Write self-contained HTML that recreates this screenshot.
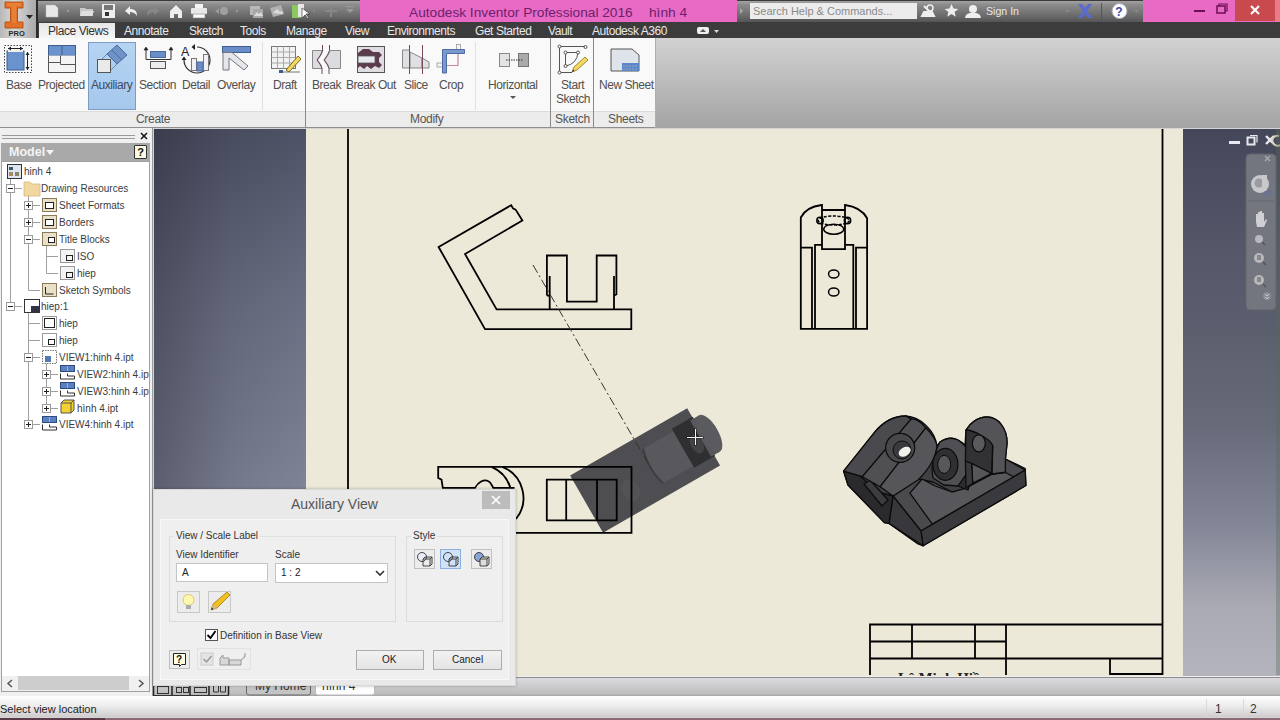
<!DOCTYPE html>
<html><head><meta charset="utf-8">
<style>
*{margin:0;padding:0;box-sizing:border-box}
html,body{width:1280px;height:720px;overflow:hidden;background:#d4d4d4;font-family:"Liberation Sans",sans-serif;position:relative}
.a{position:absolute}
.t{position:absolute;white-space:nowrap}
/* title bar */
#qat{left:0;top:0;width:1280px;height:22px;background:linear-gradient(#3a3a3a 0,#3a3a3a 1px,#a2a2a2 1px,#8a8a8a 5px,#6a6a6a 16px,#545456 22px)}
#appbtn{left:0;top:0;width:38px;height:39px;background:linear-gradient(90deg,#b8b8b8,#d8d8d8 40%,#a8a8a8);border-right:2px solid #2a2a2a;border-bottom:1px solid #2a2a2a}
#pinkL{left:360px;top:0;width:377px;height:22px;background:#e96ac4}
#pinkR{left:1143px;top:0;width:137px;height:22px;background:#e96ac4}
#closeb{left:1235px;top:0;width:40px;height:21px;background:#c94a4e}
#tabs{left:37px;top:22px;width:1243px;height:17px;background:#3c3c3c}
.tab{position:absolute;top:23px;height:17px;font-size:12px;line-height:17px;color:#e8e8e8;letter-spacing:-0.45px}
#ribbon{left:0;top:38px;width:656px;height:90px;background:#f9f9f9}
#ribR{left:656px;top:38px;width:624px;height:90px;background:linear-gradient(#d2d2d2,#a4a4a4)}
#pbar{left:0;top:111px;width:656px;height:17px;background:#ececec;border-top:1px solid #dcdcdc}
.lbl{position:absolute;font-size:12px;color:#505050;white-space:nowrap;line-height:14px;letter-spacing:-0.45px}
.plbl{position:absolute;top:111px;height:16px;font-size:12px;line-height:16px;color:#555;white-space:nowrap;letter-spacing:-0.3px}
.sep{position:absolute;top:38px;width:1px;height:90px;background:#8a8a8a}
.isep{position:absolute;top:42px;width:1px;height:68px;background:#e0e0e0}
/* browser */
#browser{left:0;top:128px;width:153px;height:569px;background:#f0f0f0;border-right:1px solid #9a9a9a}
#tree{left:1px;top:161px;width:149px;height:531px;background:#fff;border:1px solid #a0a0a0}
.row{position:absolute;height:17px;font-size:10px;line-height:17px;color:#3c3c3c;white-space:nowrap}
/* viewport */
#vp{left:154px;top:129px;width:1126px;height:546px;background:linear-gradient(100deg,#3f4354 0%,#4c5062 40%,#6a6d7f 70%,#8a8c9c 100%)}
#status{left:0;top:697px;width:1280px;height:20px;background:linear-gradient(#fafafa,#e4e4e4);}
#dock{left:153px;top:675px;width:1127px;height:22px;background:linear-gradient(#dedede,#c8c8c8)}
</style></head><body>

<div class="a" id="qat"></div>
<div class="a" id="pinkL"></div>
<div class="a" id="pinkR"></div>
<div class="a" id="closeb"></div>
<div class="t" style="left:409px;top:4px;font-size:13.7px;color:#6c1f6c;line-height:17px">Autodesk Inventor Professional 2016</div>
<div class="t" style="left:649px;top:4px;font-size:13.7px;color:#6c1f6c;line-height:17px">hình 4</div>
<div class="a" style="left:750px;top:3px;width:167px;height:16px;background:#ececec"></div>
<div class="t" style="left:753px;top:4px;font-size:11px;color:#8a8a8a;line-height:14px">Search Help &amp; Commands...</div>
<div class="a" style="left:740px;top:8px;width:0;height:0;border-left:3px solid #aaa;border-top:3px solid transparent;border-bottom:3px solid transparent"></div>
<div class="t" style="left:986px;top:4px;font-size:10.6px;color:#e8e8e8;line-height:14px">Sign In</div>
<svg class="a" style="left:0;top:0" width="1280" height="40">
<!-- QAT icons -->
<path d="M46 5h9l3 3v9H46z" fill="#e8e8e8" stroke="#bbb" stroke-width=".5"/>
<circle cx="68" cy="11" r="1.3" fill="#999"/>
<path d="M80 8h5l1 1h7v7H80z" fill="#c8c8c8"/><path d="M82 11h12l-2 5H80z" fill="#e0e0e0"/>
<rect x="102" y="4" width="13" height="14" fill="#eee"/><rect x="104" y="5" width="9" height="5" fill="#777"/><rect x="105" y="12" width="4" height="4" fill="#333"/>
<path d="M125 11l5-5v3c5 0 7 2 7 7-2-3-4-4-7-4v3z" fill="#eee"/>
<path d="M159 11l-5-5v3c-5 0-7 2-7 7 2-3 4-4 7-4v3z" fill="#888"/>
<path d="M170 11l6-6 6 6v7h-4v-4h-4v4h-4z" fill="#eee"/>
<rect x="195" y="4" width="8" height="4" fill="#f4f4f4"/><rect x="191" y="8" width="16" height="6" rx="1" fill="#e8e8e8"/><rect x="193" y="14" width="12" height="4" fill="#fafafa" stroke="#888" stroke-width=".6"/>
<path d="M215 11l4-3v6z" fill="#9a9a9a"/><circle cx="224" cy="11" r="4" fill="#a0a0a0"/><circle cx="237" cy="11" r="1.2" fill="#999"/>
<rect x="250" y="6" width="10" height="9" fill="#b8b8b8"/><rect x="253" y="9" width="10" height="9" fill="#a8a8a8"/><path d="M254 16l3-4 2 2 2-2 2 4z" fill="#ddd"/>
<path d="M270 8l11-3 3 9-11 3z" fill="#b0b0b0"/><path d="M273 13l4-4 3 3 2-1 1 3z" fill="#ddd"/>
<rect x="293" y="6" width="10" height="12" fill="#78b850"/><path d="M298 4h6v13h-6z" fill="#e8e8e8"/><rect x="292" y="5" width="6" height="13" fill="#8cc860"/>
<path d="M302 8l0 10 3-3 3 4 1-1-3-4h4z" fill="#fff" stroke="#222" stroke-width=".6"/>
<circle cx="314" cy="11" r="1.2" fill="#888"/>
<path d="M331 5v12M325 11h12" stroke="#888" stroke-width="2"/>
<path d="M346 9h8l-4 4z" fill="#999"/><rect x="346" y="6" width="8" height="1.3" fill="#999"/>
<!-- search icons -->
<path d="M924 6l9 9M922 16h12l-2-4h-8z" stroke="#eee" stroke-width="2" fill="#eee"/><circle cx="930" cy="8" r="3" fill="none" stroke="#eee" stroke-width="1.5"/>
<path d="M951.5 4l2 4.5 4.8.4-3.7 3.1 1.2 4.7-4.3-2.6-4.3 2.6 1.2-4.7-3.7-3.1 4.8-.4z" fill="#eee"/>
<circle cx="973" cy="9" r="4" fill="#eee"/><path d="M965 18c1-5 4-5 8-5s7 0 8 5z" fill="#eee"/>
<path d="M1065 10h5l-2.5 3z" fill="#888"/>
<path d="M1078 4l5 7-5 7h4l3-4 3 4h4l-5-7 5-7h-4l-3 4-3-4z" fill="#5a6ad0"/>
<rect x="1101" y="3" width="1" height="17" fill="#555"/>
<circle cx="1119.5" cy="11" r="7.5" fill="#fff" stroke="#aab" stroke-width="1"/>
<text x="1115.3" y="16" font-family="Liberation Sans" font-weight="bold" font-size="12" fill="#3548a8">?</text>
<path d="M1134 10h5l-2.5 3z" fill="#888"/>
<!-- window buttons -->
<rect x="1194" y="10" width="11" height="2" fill="#6a1050"/>
<rect x="1217" y="6" width="8" height="7" fill="none" stroke="#6a1050" stroke-width="1.5"/><path d="M1219 6V4h8v7h-2" fill="none" stroke="#6a1050" stroke-width="1.2"/>
<path d="M1251 6l8 8M1259 6l-8 8" stroke="#fff" stroke-width="2"/>
<rect x="1275" y="0" width="5" height="22" fill="#e87a8a"/>
</svg>
<div class="a" id="tabs"></div>
<div class="a" style="left:39px;top:23px;width:76px;height:16px;background:linear-gradient(#e6e6e6,#f6f6f6)"></div>
<div class="tab" style="left:48px;color:#333">Place Views</div>
<div class="tab" style="left:124px">Annotate</div>
<div class="tab" style="left:189px">Sketch</div>
<div class="tab" style="left:240px">Tools</div>
<div class="tab" style="left:286px">Manage</div>
<div class="tab" style="left:345px">View</div>
<div class="tab" style="left:387px">Environments</div>
<div class="tab" style="left:475px">Get Started</div>
<div class="tab" style="left:548px">Vault</div>
<div class="tab" style="left:592px">Autodesk A360</div>
<svg class="a" style="left:695px;top:25px" width="30" height="12"><rect x="2" y="2" width="12" height="7" rx="2" fill="#eee"/><path d="M5 7l3-3 3 3z" fill="#555"/><path d="M19 5h5l-2.5 3z" fill="#ddd"/></svg>
<div class="a" id="appbtn"></div>
<svg class="a" style="left:0;top:0" width="38" height="39">
<path d="M5 2h18v6h-5.5v14h5.5v6H5v-6h5.5V8H5z" fill="#e0702a" stroke="#b85418" stroke-width="1"/>
<path d="M7 3h14v3h-5v17h-4V6H7z" fill="#f08a40" opacity=".6"/>
<path d="M26 15h7l-3.5 4z" fill="#222"/>
<text x="8.5" y="35.5" font-family="Liberation Sans" font-weight="bold" font-size="7.5" fill="#2a2a2a">PRO</text>
</svg>

<div class="a" id="ribbon"></div>
<div class="a" id="ribR"></div>
<div class="a" id="pbar"></div>
<div class="a" style="left:0;top:127px;width:656px;height:1px;background:#8e8e8e"></div>
<div class="a" style="left:88px;top:42px;width:48px;height:68px;background:linear-gradient(#b6d4f2,#a6c8ec);border:1px solid #7c9cc4"></div>
<div class="sep" style="left:305px"></div>
<div class="sep" style="left:550px"></div>
<div class="sep" style="left:593px"></div>
<div class="sep" style="left:655px;background:#b0b0b0"></div>
<div class="isep" style="left:262px"></div>
<div class="isep" style="left:475px"></div>
<div class="lbl" style="left:6px;top:78px">Base</div>
<div class="lbl" style="left:38px;top:78px">Projected</div>
<div class="lbl" style="left:91px;top:78px;color:#3c4a5c">Auxiliary</div>
<div class="lbl" style="left:139px;top:78px">Section</div>
<div class="lbl" style="left:182px;top:78px">Detail</div>
<div class="lbl" style="left:217px;top:78px">Overlay</div>
<div class="lbl" style="left:273px;top:78px">Draft</div>
<div class="lbl" style="left:312px;top:78px">Break</div>
<div class="lbl" style="left:346px;top:78px">Break Out</div>
<div class="lbl" style="left:404px;top:78px">Slice</div>
<div class="lbl" style="left:439px;top:78px">Crop</div>
<div class="lbl" style="left:488px;top:78px">Horizontal</div>
<div class="lbl" style="left:561px;top:78px">Start</div>
<div class="lbl" style="left:556px;top:92px">Sketch</div>
<div class="lbl" style="left:599px;top:78px">New Sheet</div>
<div class="plbl" style="left:136px">Create</div>
<div class="plbl" style="left:410px">Modify</div>
<div class="plbl" style="left:555px">Sketch</div>
<div class="plbl" style="left:608px">Sheets</div>
<svg class="a" style="left:0;top:38px" width="660" height="74">
<g stroke-width="1">
<!-- Base -->
<rect x="4.5" y="7.5" width="27" height="27" fill="none" stroke="#444" stroke-dasharray="1.5 1.5"/>
<rect x="7" y="13" width="17" height="19" fill="#6a92cc" stroke="#3e5e90"/>
<rect x="8" y="12" width="15" height="2" fill="#f0f0f0"/>
<path d="M8 10.5h15M27.5 14v18" stroke="#222"/>
<path d="M8 10.5l3-2v4zM23 10.5l-3-2v4zM27.5 14l-2 3h4zM27.5 32l-2-3h4z" fill="#222" stroke="none"/>
<!-- Projected -->
<rect x="48.5" y="7.5" width="27" height="10" fill="#6a92cc" stroke="#3e5e90"/>
<path d="M62 7.5v10" stroke="#3e5e90"/>
<path d="M48.5 17.5v17h27v-17M48.5 24.5h12v-7M60.5 24.5v2h15" fill="#f4f4f4" stroke="#555"/>
<!-- Auxiliary -->
<path d="M107 16l10-9 10 10-10 9z" fill="#6f93c9" stroke="#4a6a9a"/>
<path d="M112 12l10 10" stroke="#4a6a9a"/>
<path d="M107 16l-7 7M117 26l-8 8" stroke="#6a88b0"/>
<rect x="97.5" y="21.5" width="13" height="13" fill="#eaeaea" stroke="#555"/>
<!-- Section -->
<path d="M146 10v11.5h25V10" fill="none" stroke="#333"/>
<path d="M144 12l2-3 2 3zM169 12l2-3 2 3z" fill="#222" stroke="#222" stroke-width=".6"/>
<rect x="150.5" y="13.5" width="15" height="6" fill="#6a8cc8" stroke="#4a6aa0"/>
<rect x="150.5" y="23.5" width="15" height="7" fill="#ececf0" stroke="#555"/>
<!-- Detail -->
<text x="181" y="17.5" font-family="Liberation Sans" font-size="12.5" fill="#222">A</text>
<path d="M197 9a13 13 0 1 1 -13 13" fill="none" stroke="#333" stroke-width="1.2"/>
<path d="M195 6l-3.5 3 3.5 3zM181.5 22l2.5-3.5 2.5 3.5z" fill="#222"/>
<rect x="191.5" y="20.5" width="5" height="12" fill="#f0f0f4" stroke="#777"/>
<rect x="197" y="24" width="6" height="9" fill="#6a8cc8" stroke="#4a6aa0"/>
<rect x="203.5" y="16.5" width="5" height="16" fill="#f0f0f4" stroke="#777"/>
<!-- Overlay -->
<rect x="222.5" y="8.5" width="28" height="6" fill="#6a8cc8" stroke="#3e5e90"/>
<path d="M223 14.5v17.5h6V20l15 12 4-4-16-13.5z" fill="#e4e6ec" stroke="#777"/>
<!-- Draft -->
<rect x="271.5" y="8.5" width="24" height="22" fill="#f2f2f2" stroke="#777"/>
<path d="M271.5 14h24M271.5 19.5h24M271.5 25h24M277.5 8.5v22M283.5 8.5v22M289.5 8.5v22" stroke="#aaa"/>
<path d="M286 32l12-14 3 3-12 13z" fill="#f2d860" stroke="#7a6a20"/>
<rect x="279" y="32" width="4" height="3" fill="#3e5e90"/><path d="M283 34h17" stroke="#777"/>
<!-- Break -->
<path d="M312.5 12.5H323L321 17L317.5 22L321 27L322 30.5H312.5Z" fill="#dcdce0" stroke="#888"/>
<path d="M340.5 12.5H330L328 17L324.5 22L328 27L329 30.5H340.5Z" fill="#dcdce0" stroke="#888"/>
<path d="M322.5 7V12.5L320.5 17L317 22L320.5 27L322 30.5V36M329.5 7V12.5L327.5 17L324 22L327.5 27L329 30.5V36" fill="none" stroke="#6a4a58" stroke-width="1"/>
<!-- Break Out -->
<rect x="357.5" y="8.5" width="27" height="26" fill="#e0dde0" stroke="#555"/>
<path d="M358 15l5-4h6l4 3h6l3 3-3 3v4l3 3-3 3-4-2-4 3-4-3-3 3-4-3-2 2z" fill="#5c3c4c"/>
<rect x="358" y="18" width="17" height="7" fill="#e8e8f0" stroke="#555" stroke-width=".8"/>
<!-- Slice -->
<path d="M402.5 12v18h7V12z" fill="#e0e0e4" stroke="#888"/>
<path d="M410 14l12 6v10h-12zM422 20l7 4v6h-7z" fill="#e0e0e4" stroke="#888"/>
<path d="M409.5 7v29M422.5 7v29" stroke="#7a4a5a" stroke-width="1"/>
<!-- Crop -->
<path d="M438 27.5h20v-13" fill="none" stroke="#c48a98" stroke-width="1.2"/>
<rect x="437" y="25" width="6" height="4" fill="#f4f4f4" stroke="#999" stroke-width=".8"/>
<rect x="456.5" y="6.5" width="4" height="5" fill="#f4f4f4" stroke="#999" stroke-width=".8"/>
<path d="M442.5 11.5h22v4h-18v19.5h-4z" fill="#7a98d0" stroke="#4e6aa0"/>
<!-- Horizontal -->
<rect x="499.5" y="15.5" width="10" height="13" fill="#e4e4e4" stroke="#888"/>
<rect x="518.5" y="15.5" width="10" height="13" fill="#aaa" stroke="#777"/>
<path d="M506 22h17" stroke="#333" stroke-dasharray="1.5 1"/>
<path d="M510 58h6l-3 3z" fill="#555"/>
<!-- Start Sketch -->
<path d="M559.5 8.5H585M559.5 8.5V34M559.5 34.5H572" fill="none" stroke="#555" stroke-width="1"/>
<path d="M565.5 14.5H578M565.5 14.5V28M578 14.5Q577 26 565.5 28" fill="none" stroke="#555" stroke-width="1"/>
<g fill="#fff" stroke="#444" stroke-width=".9"><circle cx="559.5" cy="8.5" r="1.5"/><circle cx="585.5" cy="9" r="1.5"/><circle cx="559.5" cy="34.5" r="1.5"/><circle cx="565.5" cy="14.5" r="1.5"/><circle cx="578" cy="14.5" r="1.5"/><circle cx="565.5" cy="28" r="1.5"/></g>
<path d="M572 34l2-5 11-10 3 3-11 10z" fill="#f2d860" stroke="#8a7420" stroke-width=".8"/><path d="M572 34l1-2.5 1.5 1.5z" fill="#333"/>
<!-- New Sheet -->
<path d="M611 11h21l7 6v16h-28z" fill="#dfe3ea" stroke="#555"/>
<rect x="622" y="25" width="17" height="8" fill="#5b86c8"/>
<path d="M623 28h15M623 31h15" stroke="#9ab" stroke-dasharray="2 1"/>
</g>
</svg>

<div class="a" id="browser"></div>
<svg class="a" style="left:0;top:128px" width="153" height="34">
<path d="M2 7.5h133M2 10.5h133" stroke="#9a9a9a" stroke-width="1"/>
<path d="M141 5l6 6M147 5l-6 6" stroke="#111" stroke-width="1.5"/>
</svg>
<div class="a" style="left:1px;top:143px;width:149px;height:18px;background:#a9a9a9"></div>
<div class="t" style="left:9px;top:145px;font-size:12.5px;font-weight:bold;color:#f4f4f4;line-height:14px">Model</div>
<svg class="a" style="left:46px;top:150px" width="10" height="6"><path d="M0 0h8l-4 5z" fill="#f4f4f4"/></svg>
<div class="a" style="left:134px;top:145px;width:13px;height:14px;background:#fffbe0;border:1px solid #333;border-radius:1px;font-size:11px;font-weight:bold;line-height:12px;text-align:center;color:#111">?</div>
<div class="a" id="tree"></div>
<svg class="a" style="left:0;top:160px" width="152" height="280">
<path d="M10.5 19V146 M28.5 36V130.5 M46.5 83V113.5 M28.5 150V264 M46.5 201V248 M14 28.5H22 M32 45.5H40 M32 62.5H40 M32 79.5H40 M28.5 130.5H40 M46.5 96.5H58 M46.5 113.5H58 M14 146.5H22 M28.5 163.5H40 M28.5 180.5H40 M32 197.5H40 M50 214.5H58 M50 231.5H58 M50 248.5H58 M32 264.5H40" stroke="#a0a0a0" stroke-width="1" fill="none"/>
<rect x="6.5" y="24.5" width="8" height="8" fill="#fff" stroke="#9a9a9a"/>
<path d="M8 28.5H13" stroke="#222" stroke-width="1"/>
<rect x="24.5" y="41.5" width="8" height="8" fill="#fff" stroke="#9a9a9a"/>
<path d="M26 45.5H31M28.5 43V48" stroke="#222" stroke-width="1"/>
<rect x="24.5" y="58.5" width="8" height="8" fill="#fff" stroke="#9a9a9a"/>
<path d="M26 62.5H31M28.5 60V65" stroke="#222" stroke-width="1"/>
<rect x="24.5" y="75.5" width="8" height="8" fill="#fff" stroke="#9a9a9a"/>
<path d="M26 79.5H31" stroke="#222" stroke-width="1"/>
<rect x="6.5" y="142.5" width="8" height="8" fill="#fff" stroke="#9a9a9a"/>
<path d="M8 146.5H13" stroke="#222" stroke-width="1"/>
<rect x="24.5" y="193.5" width="8" height="8" fill="#fff" stroke="#9a9a9a"/>
<path d="M26 197.5H31" stroke="#222" stroke-width="1"/>
<rect x="42.5" y="210.5" width="8" height="8" fill="#fff" stroke="#9a9a9a"/>
<path d="M44 214.5H49M46.5 212V217" stroke="#222" stroke-width="1"/>
<rect x="42.5" y="227.5" width="8" height="8" fill="#fff" stroke="#9a9a9a"/>
<path d="M44 231.5H49M46.5 229V234" stroke="#222" stroke-width="1"/>
<rect x="42.5" y="244.5" width="8" height="8" fill="#fff" stroke="#9a9a9a"/>
<path d="M44 248.5H49M46.5 246V251" stroke="#222" stroke-width="1"/>
<rect x="24.5" y="260.5" width="8" height="8" fill="#fff" stroke="#9a9a9a"/>
<path d="M26 264.5H31M28.5 262V267" stroke="#222" stroke-width="1"/>

<!-- icons -->
<rect x="7.5" y="4.5" width="14" height="14" fill="#dde6f0" stroke="#333"/><rect x="9" y="7" width="4" height="3" fill="#456"/><rect x="9" y="12" width="4" height="4" fill="#a86"/><rect x="15" y="12" width="4" height="4" fill="#886"/>
<path d="M24 22h6l2 2h8v12H24z" fill="#f0d8a0" stroke="#d8b878" stroke-width=".8"/>
<g fill="#e8e0c8" stroke="#8a7a5a"><rect x="42.5" y="38.5" width="14" height="13"/><rect x="42.5" y="55.5" width="14" height="13"/><rect x="42.5" y="72.5" width="14" height="13"/><rect x="42.5" y="123.5" width="14" height="13"/></g>
<g fill="#fff" stroke="#222"><rect x="45.5" y="42.5" width="8" height="6"/><rect x="45.5" y="59.5" width="8" height="6"/><rect x="48.5" y="77.5" width="6" height="5"/><path d="M45.5 127v7h8" fill="none"/></g>
<g fill="#f4f4f4" stroke="#999"><rect x="60.5" y="89.5" width="14" height="13"/><rect x="60.5" y="106.5" width="14" height="13"/></g>
<g fill="none" stroke="#222"><rect x="66.5" y="95.5" width="6" height="5"/><rect x="66.5" y="112.5" width="6" height="5"/></g>
<rect x="24.5" y="139.5" width="15" height="13" fill="#fff" stroke="#333"/><rect x="31" y="146" width="8" height="6" fill="#334"/>
<rect x="42.5" y="156.5" width="14" height="13" fill="#fff" stroke="#999"/><rect x="44.5" y="158.5" width="10" height="9" fill="none" stroke="#222"/>
<rect x="42.5" y="173.5" width="14" height="13" fill="#fff" stroke="#999"/><rect x="48.5" y="179.5" width="6" height="5" fill="none" stroke="#222"/>
<rect x="42.5" y="190.5" width="14" height="13" fill="#fff" stroke="#777" stroke-dasharray="1.5 1"/><rect x="45" y="196" width="6" height="6" fill="#557ab0"/>
<g><rect x="60.5" y="205.5" width="14" height="6" fill="#5a80c0" stroke="#2a4a80"/><path d="M67.5 206v5" stroke="#9ab4e0"/><path d="M60.5 213.5v5.5h14v-3h-7v-2.5" fill="#fff" stroke="#333" stroke-width="1"/><rect x="60.5" y="222.5" width="14" height="6" fill="#5a80c0" stroke="#2a4a80"/><path d="M67.5 223v5" stroke="#9ab4e0"/><path d="M60.5 230.5v5.5h14v-3h-7v-2.5" fill="#fff" stroke="#333" stroke-width="1"/>
<path d="M61 243l3-3h10v10l-3 3H61z" fill="#f4d030" stroke="#555"/><path d="M61 243h10v10M71 243l3-3" fill="none" stroke="#555"/>
<rect x="42.5" y="256.5" width="14" height="6" fill="#5a80c0" stroke="#2a4a80"/><path d="M49.5 257v5" stroke="#9ab4e0"/><path d="M42.5 264.5v5.5h14v-3h-7v-2.5" fill="#fff" stroke="#333" stroke-width="1"/></g>
</svg>
<div class="row" style="left:24px;top:163px">hinh 4</div>
<div class="row" style="left:41px;top:180px">Drawing Resources</div>
<div class="row" style="left:59px;top:197px">Sheet Formats</div>
<div class="row" style="left:59px;top:214px">Borders</div>
<div class="row" style="left:59px;top:231px">Title Blocks</div>
<div class="row" style="left:77px;top:248px">ISO</div>
<div class="row" style="left:77px;top:265px">hiep</div>
<div class="row" style="left:59px;top:282px">Sketch Symbols</div>
<div class="row" style="left:41px;top:298px">hiep:1</div>
<div class="row" style="left:59px;top:315px">hiep</div>
<div class="row" style="left:59px;top:332px">hiep</div>
<div class="row" style="left:59px;top:349px">VIEW1:hinh 4.ipt</div>
<div class="a" style="left:77px;top:366px;width:72px;height:40px;overflow:hidden"><div class="row" style="left:0;top:0">VIEW2:hinh 4.ipt</div><div class="row" style="left:0;top:17px">VIEW3:hinh 4.ipt</div></div>
<div class="row" style="left:77px;top:400px">hình 4.ipt</div>
<div class="row" style="left:59px;top:416px">VIEW4:hinh 4.ipt</div>
<!-- h scrollbar -->
<div class="a" style="left:2px;top:676px;width:147px;height:15px;background:#f0f0f0"></div>
<div class="a" style="left:18px;top:676px;width:111px;height:14px;background:#cdcdcd"></div>
<svg class="a" style="left:2px;top:675px" width="147" height="17"><path d="M10 5l-4 3.5 4 3.5M137 5l4 3.5-4 3.5" fill="none" stroke="#555" stroke-width="1.5"/></svg>
<svg class="a" style="left:0;top:0" width="1280" height="720" viewBox="0 0 1280 720">
<defs>
<linearGradient id="vpg" x1="0" y1="0" x2="0" y2="1">
<stop offset="0" stop-color="#44475a"/><stop offset="0.212" stop-color="#545768"/><stop offset="0.377" stop-color="#5c5f6e"/><stop offset="0.542" stop-color="#676a79"/><stop offset="0.725" stop-color="#838696"/><stop offset="0.872" stop-color="#aaaab4"/><stop offset="1" stop-color="#b4b4be"/>
</linearGradient>
<linearGradient id="vpl" x1="0" y1="0" x2="0" y2="1">
<stop offset="0" stop-color="#4e5266"/><stop offset="0.31" stop-color="#6a6e82"/><stop offset="0.62" stop-color="#7c8194"/><stop offset="1" stop-color="#9ca0b4"/>
</linearGradient>
<linearGradient id="vplh" x1="0" y1="0" x2="1" y2="0">
<stop offset="0" stop-color="#101018" stop-opacity="0.32"/><stop offset="0.5" stop-color="#101018" stop-opacity="0.1"/><stop offset="1" stop-color="#101018" stop-opacity="0"/>
</linearGradient>
</defs>
<rect x="154" y="129" width="1126" height="547" fill="url(#vpg)"/>
<rect x="154" y="129" width="152" height="547" fill="url(#vpl)"/>
<rect x="154" y="129" width="152" height="547" fill="url(#vplh)"/>
<rect x="306" y="129" width="877" height="547" fill="#ece9d8"/>
<!-- aux dark preview -->
<g transform="translate(645.1 470.5) rotate(-29.9)">
<rect x="-67.5" y="-33" width="135" height="66" fill="#4e4e52"/>
<path d="M10 -20Q4 0 10 20H44V-20Z" fill="#59595d"/>
<path d="M10 -20Q4 0 10 20H8Q2 0 8 -20Z" fill="#3e3e42"/>
<path d="M44 -23H68V22H44Z" fill="#2f2f32"/>
<path d="M64 -21H74V21H64Z" fill="#58585c"/>
<ellipse cx="74" cy="0" rx="9" ry="21" fill="#5b5b5f"/>
<ellipse cx="58" cy="3" rx="6" ry="10" fill="#434347"/>
<ellipse cx="-22" cy="10" rx="9" ry="11" fill="#58585c" opacity="0.5"/>
</g>
<!-- iso part -->
<g stroke="#0c0c0c" stroke-width="1.3" stroke-linejoin="round">
<!-- silhouette -->
<path d="M843.6 471.1L874.7 432.2C884 421 895 416 906 416C920 417 935 430 937 446L940 442C946 438 952 437 958 440C962 442 964 444 965 445L966 430C970 423 978 417 987 417C998 417 1007 428 1007.1 443L1005.4 459L1025.2 468.5L1025.9 485.5L923.1 545.8L918 544L889 523.4L884.4 522.6L848 485Z" fill="#404044"/>
<!-- base top face -->
<path d="M893 496L921 531L1025.2 470L1005.4 459L1005 472L992 474L966 488L952 492L933 482L918 479Z" fill="#4a4a4e"/>
<path d="M909.9 493.2L932.4 524.1L1014 477L1005.4 472.5L991.6 474.4L966 488L952 492L935 486L922 479Z" fill="#58585c"/>
<!-- base side faces -->
<path d="M921 531L1025.2 470L1025.9 485.5L923.1 545.8Z" fill="#3a3a3e"/>
<path d="M893 496L921 531L923.1 545.8L889 523.4Z" fill="#38383c"/>
<!-- left lug dark side -->
<path d="M843.6 471.1L848 485L884.4 522.6L889 523.4L893 496L878 492L860 476Z" fill="#2a2a2d"/>
<path d="M864 484L882 506L888 500L870 480Z" fill="#3c3c40"/>
<!-- left lug top strips -->
<path d="M843.6 471.1L874.7 432.2C884 421 895 416 906 416L911.3 418.9L862.4 476.7Z" fill="#4a4a4e"/>
<path d="M906 416L911.3 418.9C916 419 921 422 925.8 427.8L880.2 486.7L862.4 476.7L911.3 418.9Z" fill="#505054"/>
<path d="M925.8 427.8C931 433 936 440 937 446C936 458 928 470 918 480L893 496L880.2 486.7Z" fill="#56565a"/>
<!-- middle lug -->
<path d="M937 448L940 442C946 438 952 437 958 440C966 445 970 454 970.4 462.2C970 470 966 478 958 486L944 485L933 478L931.8 468Z" fill="#505054"/>
<path d="M958 486L965 476L971 480L968 490Z" fill="#2c2c2f"/>
<!-- right lug -->
<path d="M966 430C970 423 978 417 987 417C998 417 1007 428 1007.1 443L1005.4 459L1005.4 472.2L992 474L992.7 445.6Z" fill="#545458"/>
<path d="M966 430C972 430 990 438 992.7 445.6L991.6 474.4L965.4 461.1Z" fill="#323235"/>
<path d="M971.6 463.3L991.6 473.3L972.7 483.3Z" fill="#56565a"/>
<path d="M965.4 461.1L971.6 463.3L972.7 483.3L966 488Z" fill="#3a3a3e"/>
</g>
<!-- holes -->
<circle cx="900.2" cy="447.8" r="14.5" fill="#48484c" stroke="#0c0c0c" stroke-width="1.2"/>
<circle cx="902" cy="450" r="9" fill="#3a3a3e" stroke="#0c0c0c" stroke-width="1"/>
<ellipse cx="904.7" cy="451.7" rx="6.5" ry="4.3" transform="rotate(-30 904.7 451.7)" fill="#f0f0e8"/>
<ellipse cx="945.4" cy="464.4" rx="12.5" ry="16" fill="#2f2f32" stroke="#0c0c0c" stroke-width="1.2"/>
<ellipse cx="944.2" cy="464.4" rx="6.5" ry="9" fill="#58585c" stroke="#0c0c0c" stroke-width="1"/>
<ellipse cx="978.8" cy="443.3" rx="6.5" ry="8.5" fill="#5a5a5e" stroke="#0c0c0c" stroke-width="1.2"/>
<g fill="none" stroke="#000" stroke-width="1.8" stroke-linejoin="miter">
<line x1="348" y1="129" x2="348" y2="675"/>
<line x1="1162.5" y1="129" x2="1162.5" y2="675"/>
<!-- title block -->
<path d="M870 675V624.5H1162M870 641.5H1006M870 658.5H1162M912 624.5V658.5M975 624.5V658.5M1006 624.5V675M1110 658.5V675M1110 674H1162"/>
<!-- top-left view -->
<path d="M438.6 247L511.2 205.2L513.2 208.6L515.6 209.6L522.4 220.5L465 254L496.6 309.4H631.3V329.1H485Z"/>
<path d="M549.7 309.4V276M546.9 295.6V255.5H566.9V301.7H596.7V255.5H616.4V294.9M614 309.4V276M546.9 295.6H549.7M616.4 294.9H614"/>
<!-- bottom-left view -->
<path d="M515 532.9H631.5V466.8H438.2V478L441.5 479.6L442.8 487.8H475C478 482 484 479 488 481C491 482 492 486 493.2 487.8H514.5"/>
<path d="M502.2 466.8A33.5 33.5 0 0 1 516 519"/>
<path d="M491.5 466.8A33 33 0 0 1 510.4 487.8"/>
<path d="M546.8 479.6H616.7V520.3H546.8ZM566.2 479.6V520.3M597 479.6V520.3"/>
<!-- top-right view -->
<path d="M800.8 328.9V217.5Q806 207 821.7 205H822V249.2H845V205Q861 207 867.1 218.3V328.9ZM822 210H845"/>
<path d="M800.8 247.6H812V328.9M815 328.9V244.9H822M845 244.9H853.3V328.9M856 328.9V247.6H867.1"/>
</g>
<g fill="none" stroke="#000" stroke-width="1.5">
<ellipse cx="833.75" cy="220.5" rx="15.5" ry="4.5" stroke-dasharray="3 1.5"/>
<circle cx="820" cy="220.5" r="3.2"/><circle cx="847.5" cy="220.5" r="3.2"/>
<ellipse cx="833.75" cy="229.2" rx="10" ry="5"/>
<ellipse cx="833.75" cy="274" rx="5.2" ry="4"/>
<ellipse cx="833.75" cy="292" rx="5.2" ry="4"/>
</g>


<!-- title block text -->
<text x="898" y="683" font-family="Liberation Serif" font-weight="bold" font-size="15" fill="#222">Lê Minh Hiền</text>
<!-- viewport window controls -->
<rect x="1229" y="141" width="11" height="3" fill="#e8e8ee"/>
<rect x="1247.5" y="137.5" width="7" height="7" fill="none" stroke="#e8e8ee" stroke-width="2"/><path d="M1250 135.5h7v7" fill="none" stroke="#e8e8ee" stroke-width="1.2"/>
<path d="M1266 136l8 8M1274 136l-8 8" stroke="#e8e8ee" stroke-width="2.4"/>
<path d="M1279 136a5 5 0 1 0 1 9" fill="none" stroke="#d8d0b8" stroke-width="2"/>
<rect x="1276" y="129" width="4" height="546" fill="#5a6a5a" opacity=".35"/>
<!-- nav bar -->
<rect x="1246" y="154" width="30" height="156" rx="4" fill="#74767f" stroke="#62646c" stroke-width="1"/>
<path d="M1265 156l5 5M1270 156l-5 5" stroke="#a8aab2" stroke-width="1.2"/>
<circle cx="1260" cy="184" r="9" fill="#c8c8cc"/><circle cx="1259" cy="183" r="4.5" fill="#9a9aa0"/><rect x="1262" y="175" width="5" height="14" fill="#c8c8cc"/>
<text x="1264" y="195" font-family="Liberation Sans" font-size="6" fill="#5a6ab8">3D</text>
<path d="M1248 201h26" stroke="#666870"/>
<path d="M1256 222v-8l2 0v6v-8h2v8v-9h2v9v-7h2v9l2-3 1 1-3 7h-7z" fill="#d0d0d4"/>
<circle cx="1259" cy="239" r="4" fill="#b8b8be"/><path d="M1262 242l3 3" stroke="#555" stroke-width="1.5"/>
<circle cx="1259" cy="258" r="5" fill="#b8b8be"/><rect x="1257" y="255" width="4" height="5" fill="#888"/><path d="M1263 262l3 3" stroke="#555" stroke-width="1.5"/>
<circle cx="1259" cy="280" r="5" fill="#b8b8be"/><rect x="1257" y="277" width="4" height="5" fill="#888"/><path d="M1263 284l3 3" stroke="#555" stroke-width="1.5"/>
<circle cx="1267" cy="296" r="4" fill="#8a8c94"/><path d="M1265 294l2 2 2-2M1265 297l2 2 2-2" fill="none" stroke="#c8c8d0" stroke-width="1"/>
<line x1="533" y1="265" x2="652" y2="470" stroke="#333" stroke-width="1" stroke-dasharray="9 3 2 3"/>
<!-- crosshair -->
<g stroke="#000" stroke-width="2.5" opacity="0.35"><line x1="686" y1="437.5" x2="704" y2="437.5"/><line x1="695.5" y1="428" x2="695.5" y2="446"/></g>
<g stroke="#f4f4f4" stroke-width="1"><line x1="687" y1="437.5" x2="703" y2="437.5"/><line x1="695.5" y1="429" x2="695.5" y2="445"/></g>

</svg>


<!-- dock tabs -->
<div class="a" style="left:153px;top:676px;width:1127px;height:20px;background:linear-gradient(#f2f0ee 0,#f2f0ee 1px,#8c8c8c 1px,#8c8c8c 2px,#dcdce0 2px,#bcbcbc 18px,#a4a4a4 20px)"></div>
<svg class="a" style="left:153px;top:683px" width="230" height="13">
<g fill="none" stroke="#333" stroke-width="1">
<path d="M0.5 1V12M19 1V12M37 1V12M56 1V12M75.5 1V12" stroke="#222" stroke-width="1.5"/>
<rect x="4.5" y="3.5" width="11" height="7"/><rect x="23.5" y="4.5" width="5" height="5"/><rect x="30.5" y="4.5" width="5" height="5"/>
<rect x="41.5" y="4.5" width="12" height="5"/><path d="M60.5 2v7h5v-7M67.5 2v7h5v-7"/>
<path d="M0 12.5h76"/>
</g>
<path d="M93.5 -2v12q0 2 3 2h58q3 0 3-2v-12" fill="#c4c4c4" stroke="#666"/>
<path d="M162.5 -2v12q0 2 3 2h53q3 0 3-2v-12" fill="#fdfdfd" stroke="#bbb"/>
</svg>
<div class="a" style="left:246px;top:682px;width:140px;height:12px;overflow:hidden">
<div class="t" style="left:9px;top:-3px;font-size:12px;color:#333;line-height:14px">My Home</div>
<div class="t" style="left:76px;top:-3px;font-size:12px;color:#333;line-height:14px">hình 4</div>
</div>
<!-- dialog -->
<div class="a" style="left:153px;top:489px;width:363px;height:197px;background:#e9e9e9;border:1px solid #d8d8d8;box-shadow:0 0 3px rgba(0,0,0,.25)"></div>
<div class="t" style="left:291px;top:496px;font-size:14px;color:#555;line-height:16px">Auxiliary View</div>
<div class="a" style="left:482px;top:491px;width:28px;height:18px;background:#bcbcbc"></div>
<svg class="a" style="left:482px;top:491px" width="28" height="18"><path d="M10 5l8 8M18 5l-8 8" stroke="#fff" stroke-width="1.6"/></svg>
<div class="a" style="left:160px;top:519px;width:349px;height:161px;background:#efefef;border:1px solid #f8f8f8"></div>
<div class="a" style="left:169px;top:536px;width:227px;height:86px;border:1px solid #dcdcdc;border-top-color:#e0e0e0"></div>
<div class="a" style="left:406px;top:536px;width:97px;height:86px;border:1px solid #dcdcdc"></div>
<div class="t" style="left:174px;top:529px;font-size:10px;color:#333;background:#efefef;padding:0 2px;line-height:13px">View / Scale Label</div>
<div class="t" style="left:411px;top:529px;font-size:10px;color:#333;background:#efefef;padding:0 2px;line-height:13px">Style</div>
<div class="t" style="left:176px;top:548px;font-size:10px;color:#333;line-height:13px">View Identifier</div>
<div class="t" style="left:275px;top:548px;font-size:10px;color:#333;line-height:13px">Scale</div>
<div class="a" style="left:176px;top:563px;width:92px;height:19px;background:#fff;border:1px solid #c4c4c4"></div>
<div class="t" style="left:182px;top:566px;font-size:10px;color:#222;line-height:13px">A</div>
<div class="a" style="left:275px;top:563px;width:113px;height:20px;background:#fff;border:1px solid #c4c4c4"></div>
<div class="t" style="left:281px;top:566px;font-size:10px;color:#222;line-height:13px">1 : 2</div>
<svg class="a" style="left:374px;top:568px" width="12" height="10"><path d="M2 3l4 4 4-4" fill="none" stroke="#333" stroke-width="1.6"/></svg>
<div class="a" style="left:177px;top:591px;width:23px;height:22px;background:#ececec;border:1px solid #c8c8c8"></div>
<div class="a" style="left:208px;top:591px;width:23px;height:22px;background:#ececec;border:1px solid #c8c8c8"></div>
<svg class="a" style="left:177px;top:591px" width="60" height="22">
<circle cx="11.5" cy="9" r="5.5" fill="#fff8b0" stroke="#d8c860"/><rect x="9" y="14" width="5" height="4" fill="#aaa"/>
<path d="M34 19l2-6 14-12 3 3-13 13z" fill="#f0c020" stroke="#a07810" stroke-width=".8"/><path d="M34 19l2-6 4 4z" fill="#d8b888"/><path d="M34 19l1-2.5 1.5 1.5z" fill="#222"/>
</svg>
<div class="a" style="left:414px;top:549px;width:21px;height:20px;background:#ececec;border:1px solid #c0c0c0"></div>
<div class="a" style="left:440px;top:549px;width:21px;height:20px;background:#cfe2f8;border:1px solid #8cb0e0"></div>
<div class="a" style="left:471px;top:549px;width:21px;height:20px;background:#ececec;border:1px solid #c0c0c0"></div>
<svg class="a" style="left:414px;top:549px" width="80" height="20">
<g fill="none" stroke="#333" stroke-width=".9">
<circle cx="8" cy="8" r="4.5" fill="#e8ecf8"/><path d="M9 10h7v7H9zM9 10l2-2h7l-2 2M18 8v7l-2 2"/>
<circle cx="34" cy="8" r="4.5"/><path d="M35 10h7v7h-7zM35 10l2-2h7l-2 2M44 8v7l-2 2"/>
<circle cx="65" cy="8" r="4.5" fill="#8aa4d8"/><path d="M66 10h7v7h-7zM66 10l2-2h7l-2 2M75 8v7l-2 2" fill="#ddd"/>
</g>
</svg>
<div class="a" style="left:205px;top:629px;width:13px;height:12px;background:#fff;border:1px solid #555"></div>
<svg class="a" style="left:205px;top:629px" width="13" height="12"><path d="M2.5 6l3 3 5-7" fill="none" stroke="#000" stroke-width="1.8"/></svg>
<div class="t" style="left:220px;top:629px;font-size:10px;color:#333;line-height:13px">Definition in Base View</div>
<div class="a" style="left:169px;top:650px;width:21px;height:19px;background:#ececec;border:1px solid #bdbdbd"></div>
<svg class="a" style="left:169px;top:650px" width="21" height="19"><path d="M4.5 3.5h12v11h-4l-2 2v-2h-6z" fill="#fffce0" stroke="#222"/><text x="7" y="13" font-family="Liberation Sans" font-weight="bold" font-size="10" fill="#111">?</text></svg>
<div class="a" style="left:197px;top:648px;width:54px;height:22px;border:1px solid #e2e2e2"></div>
<svg class="a" style="left:197px;top:648px" width="54" height="22">
<rect x="4" y="5" width="12" height="12" fill="#e4e4e4" stroke="#ccc"/><path d="M6.5 11l3 3 5-6" fill="none" stroke="#999" stroke-width="1.5"/>
<path d="M23 17v-7l3-3v3h6v7zM32 12h12v5h-12zM44 12l4-3v-4" fill="#d8d8d8" stroke="#999"/>
</svg>
<div class="a" style="left:356px;top:650px;width:68px;height:20px;background:linear-gradient(#f2f2f2,#e4e4e4);border:1px solid #adadad"></div>
<div class="t" style="left:382px;top:653px;font-size:10px;color:#222;line-height:13px">OK</div>
<div class="a" style="left:433px;top:650px;width:69px;height:20px;background:linear-gradient(#f2f2f2,#e4e4e4);border:1px solid #adadad"></div>
<div class="t" style="left:452px;top:653px;font-size:10px;color:#222;line-height:13px">Cancel</div>
<div class="a" style="left:0;top:696px;width:1280px;height:21px;background:linear-gradient(#fefefe,#ebebeb 50%,#d0ccce)"></div>
<div class="t" style="left:0px;top:702px;font-size:11px;color:#222;line-height:14px">Select view location</div>
<div class="a" style="left:1206px;top:699px;width:1px;height:18px;background:#d8d8d8"></div>
<div class="a" style="left:1243px;top:699px;width:1px;height:18px;background:#d8d8d8"></div>
<div class="t" style="left:1215px;top:702px;font-size:12px;color:#333;line-height:14px">1</div>
<div class="t" style="left:1250px;top:702px;font-size:12px;color:#333;line-height:14px">2</div>
<div class="a" style="left:0;top:718px;width:1280px;height:2px;background:#8a6a74"></div><div class="a" style="left:0;top:718px;width:105px;height:2px;background:#5a3a48"></div>
</body></html>
